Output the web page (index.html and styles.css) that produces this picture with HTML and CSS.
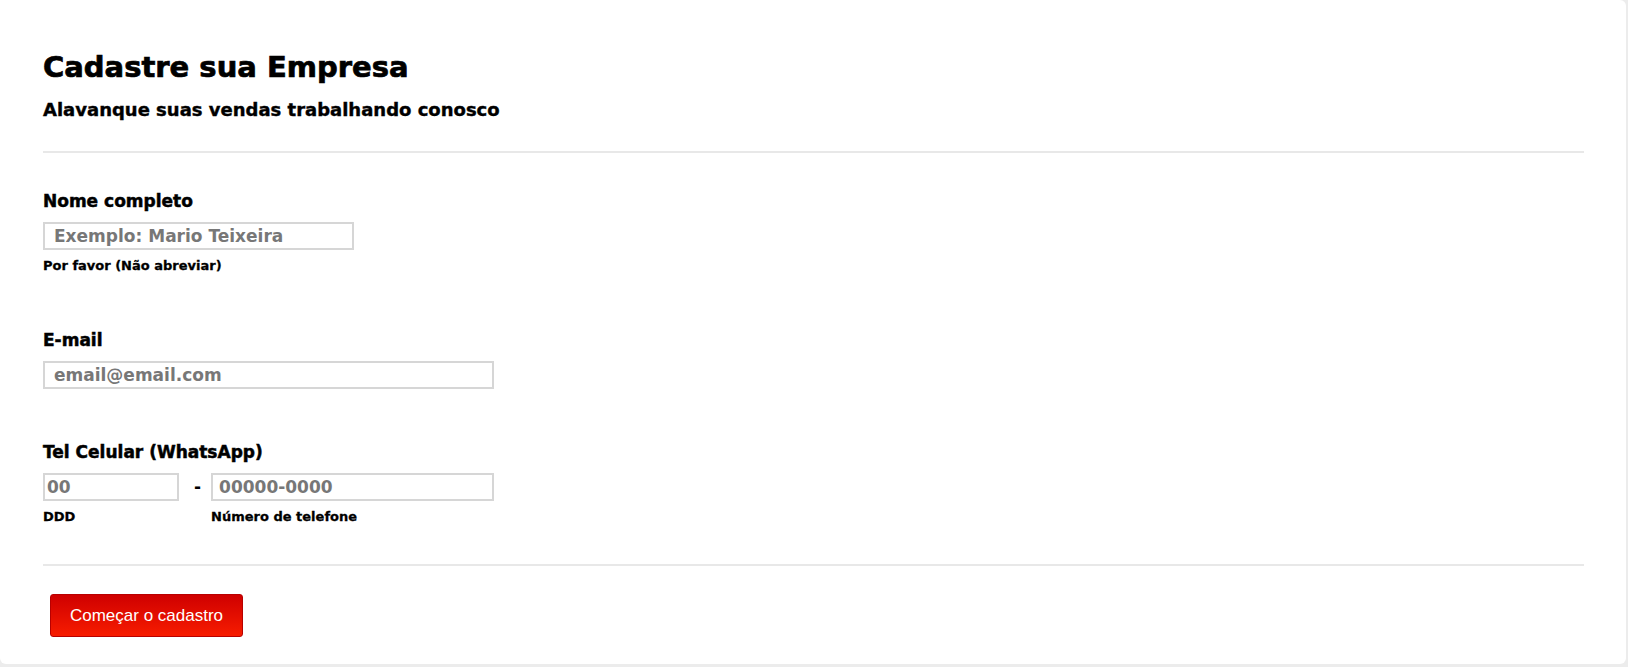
FILE: index.html
```html
<!DOCTYPE html>
<html lang="pt-BR">
<head>
<meta charset="utf-8">
<title>Cadastre sua Empresa</title>
<link rel="stylesheet" href="styles.css">
</head>
<body>
<div class="card">
  <h1 class="title">Cadastre sua Empresa</h1>
  <h2 class="subtitle">Alavanque suas vendas trabalhando conosco</h2>
  <div class="divider"></div>
  <form class="form">
    <div class="group">
      <label class="label">Nome completo</label>
      <input class="field field-name" type="text" placeholder="Exemplo: Mario Teixeira">
      <div class="hint">Por favor (Não abreviar)</div>
    </div>
    <div class="group group-email">
      <label class="label">E-mail</label>
      <input class="field field-email" type="text" placeholder="email@email.com">
    </div>
    <div class="group group-last">
      <label class="label">Tel Celular (WhatsApp)</label>
      <div class="phone-row">
        <div class="phone-col">
          <input class="field field-ddd" type="text" placeholder="00">
          <div class="sub">DDD</div>
        </div>
        <span class="dash">-</span>
        <div class="phone-col">
          <input class="field field-num" type="text" placeholder="00000-0000">
          <div class="sub">Número de telefone</div>
        </div>
      </div>
    </div>
    <div class="divider divider-bottom"></div>
    <button class="btn" type="button">Começar o cadastro</button>
  </form>
</div>
</body>
</html>
```

FILE: styles.css
```css
html, body {
  margin: 0;
  padding: 0;
}
body {
  background: #ececec;
  height: 667px;
  overflow: hidden;
  font-family: "DejaVu Sans", "Liberation Sans", sans-serif;
  color: #000;
}
.card {
  background: #fff;
  margin-right: 2px;
  height: 664px;
  box-sizing: border-box;
  border-radius: 0 6px 6px 6px;
  padding: 50px 42px 0 43px;
}
.title {
  margin: 0;
  font-size: 29px;
  line-height: 34px;
  font-weight: 700;
  -webkit-text-stroke: 0.7px #000;
}
.subtitle {
  margin: 15px 0 0;
  font-size: 18px;
  line-height: 22px;
  font-weight: 700;
  -webkit-text-stroke: 0.4px #000;
}
.divider {
  height: 2px;
  background: #e8e8e8;
  margin-top: 30px;
}
.form {
  margin: 38px 0 0;
}
.group {
  margin-bottom: 56px;
}
.group-email {
  margin-bottom: 53px;
}
.group-last {
  margin-bottom: 0;
}
.label {
  display: block;
  font-size: 17px;
  line-height: 20px;
  font-weight: 700;
  -webkit-text-stroke: 0.5px #000;
}
.field {
  display: block;
  box-sizing: border-box;
  height: 28px;
  margin-top: 11px;
  border: 2px solid #d6d6d6;
  border-radius: 0;
  padding: 0 0 0 9px;
  font-family: "DejaVu Sans", "Liberation Sans", sans-serif;
  font-size: 17px;
  font-weight: 700;
  color: #777;
  background: #fff;
  outline: none;
}
.field::placeholder {
  color: #777;
  opacity: 1;
}
.field-name { width: 311px; }
.field-email { width: 451px; }
.field-ddd { width: 136px; padding-left: 2px; }
.field-num { width: 283px; padding-left: 6px; }
.hint {
  margin-top: 8px;
  font-size: 13px;
  line-height: 16px;
  font-weight: 700;
  -webkit-text-stroke: 0.3px #000;
}
.phone-row {
  display: flex;
  align-items: flex-start;
}
.phone-col {
  display: flex;
  flex-direction: column;
}
.sub {
  margin-top: 8px;
  font-size: 13px;
  line-height: 16px;
  font-weight: 700;
  -webkit-text-stroke: 0.3px #000;
}
.dash {
  margin: 11px 10px 0 15px;
  height: 28px;
  line-height: 28px;
  font-size: 17px;
  font-weight: 700;
}
.divider-bottom {
  margin-top: 39px;
}
.btn {
  display: block;
  margin: 28px 0 0 7px;
  width: 193px;
  height: 43px;
  border: 1px solid #b80000;
  border-radius: 3px;
  background: linear-gradient(to bottom, #cf0000, #f71c00);
  color: #fff;
  font-family: "Liberation Sans", Arial, sans-serif;
  font-size: 17px;
  font-weight: 400;
  padding: 0;
}
```
